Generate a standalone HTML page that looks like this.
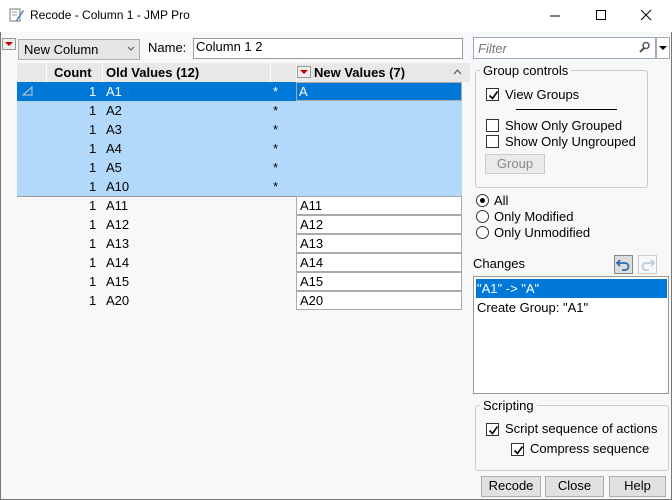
<!DOCTYPE html>
<html><head><style>
*{box-sizing:border-box;margin:0;padding:0}
body{width:672px;height:500px;background:#f8f8f8;font-family:"Liberation Sans",sans-serif;font-size:13px;color:#000;position:relative;overflow:hidden}
.a{position:absolute}
.t{position:absolute;white-space:nowrap;line-height:19px}
.cb{position:absolute;width:13px;height:13px;border:1px solid #333;background:#fff}
.cb svg{position:absolute;left:1px;top:1px}
.rb{position:absolute;width:13px;height:13px;border:1px solid #333;border-radius:50%;background:#fff}
.btn{position:absolute;border:1px solid #adadad;background:#e1e1e1;text-align:center;line-height:18px;font-size:13px}
.nv{position:absolute;left:296px;width:166px;height:19px;border:1px solid #aaa;background:#fff;padding-left:3px;line-height:17px}
</style></head><body>
<div class="a" style="left:0;top:0;width:672px;height:32px;background:#fff"></div>
<svg class="a" style="left:9px;top:7px" width="16" height="16"><rect x="1" y="2" width="10" height="12" fill="#fff" stroke="#777"/><line x1="3" y1="5" x2="8" y2="5" stroke="#999"/><line x1="3" y1="8" x2="8" y2="8" stroke="#999"/><path d="M7 13 L14 3 L15 4 L8 14 Z" fill="#4a7fc0"/></svg>
<div class="t" style="left:30px;top:6px;font-size:12px">Recode - Column 1 - JMP Pro</div>
<svg class="a" style="left:550px;top:8px" width="110" height="16"><line x1="0" y1="8" x2="10" y2="8" stroke="#000"/><rect x="46.5" y="2.5" width="9" height="9" fill="none" stroke="#000"/><path d="M91 2 L101 12 M101 2 L91 12" stroke="#000"/></svg>
<div class="a" style="left:0;top:32px;width:1px;height:468px;background:#777"></div>
<div class="a" style="left:671px;top:32px;width:1px;height:468px;background:#777"></div>
<div class="a" style="left:0;top:499px;width:672px;height:1px;background:#777"></div>
<div class="a" style="left:2px;top:38px;width:14px;height:12px;border:1px solid #999;background:#eee"></div>
<svg class="a" style="left:4px;top:40px" width="10" height="8"><path d="M1 2 L9 2 L5 6 Z" fill="#c00"/></svg>
<div class="a" style="left:18px;top:39px;width:122px;height:21px;border:1px solid #adadad;background:#e5e5e5"></div>
<div class="t" style="left:24px;top:40px;font-size:13px">New Column</div>
<svg class="a" style="left:127px;top:46px" width="8" height="6"><path d="M1 1 L4 4 L7 1" fill="none" stroke="#555"/></svg>
<div class="t" style="left:148px;top:38px;font-size:13px">Name:</div>
<div class="a" style="left:193px;top:38px;width:270px;height:21px;border:1px solid #999;background:#fff"></div>
<div class="t" style="left:196px;top:37px;font-size:13px">Column 1 2</div>
<div class="a" style="left:17px;top:63px;width:453px;height:19px;background:#e8e8e8"></div>
<div class="a" style="left:46px;top:63px;width:1px;height:19px;background:#fff"></div>
<div class="a" style="left:102px;top:63px;width:1px;height:19px;background:#fff"></div>
<div class="a" style="left:270px;top:63px;width:1px;height:19px;background:#fff"></div>
<div class="a" style="left:296px;top:63px;width:1px;height:19px;background:#fff"></div>
<div class="t" style="left:54px;top:63px;font-weight:bold">Count</div>
<div class="t" style="left:106px;top:63px;font-weight:bold">Old Values (12)</div>
<div class="a" style="left:297px;top:66px;width:14px;height:12px;border:1px solid #999;background:#eee"></div>
<svg class="a" style="left:299px;top:68px" width="10" height="8"><path d="M1 2 L9 2 L5 6 Z" fill="#c00"/></svg>
<div class="t" style="left:314px;top:63px;font-weight:bold">New Values (7)</div>
<svg class="a" style="left:453px;top:69px" width="9" height="6"><path d="M1 5 L4.5 1 L8 5" fill="none" stroke="#444"/></svg>
<div class="a" style="left:17px;top:82px;width:445px;height:114px;background:#b3d9fa"></div>
<div class="a" style="left:17px;top:82px;width:445px;height:19px;background:#0078d7"></div>
<div class="a" style="left:17px;top:196px;width:445px;height:1px;background:#999"></div>
<svg class="a" style="left:22px;top:86px" width="12" height="10"><path d="M1 9 L10 9 L10 1 Z" fill="none" stroke="#ccc"/></svg>
<div class="a" style="left:296px;top:82px;width:166px;height:19px;border:1px solid #aaa"></div>
<div class="t" style="left:299px;top:82px;color:#fff">A</div>
<div class="t" style="left:89px;top:82px;color:#fff">1</div><div class="t" style="left:106px;top:82px;color:#fff">A1</div><div class="t" style="left:273px;top:82px;color:#fff">*</div>
<div class="t" style="left:89px;top:101px">1</div><div class="t" style="left:106px;top:101px">A2</div><div class="t" style="left:273px;top:101px">*</div>
<div class="t" style="left:89px;top:120px">1</div><div class="t" style="left:106px;top:120px">A3</div><div class="t" style="left:273px;top:120px">*</div>
<div class="t" style="left:89px;top:139px">1</div><div class="t" style="left:106px;top:139px">A4</div><div class="t" style="left:273px;top:139px">*</div>
<div class="t" style="left:89px;top:158px">1</div><div class="t" style="left:106px;top:158px">A5</div><div class="t" style="left:273px;top:158px">*</div>
<div class="t" style="left:89px;top:177px">1</div><div class="t" style="left:106px;top:177px">A10</div><div class="t" style="left:273px;top:177px">*</div>
<div class="t" style="left:89px;top:196px">1</div><div class="t" style="left:106px;top:196px">A11</div><div class="nv" style="top:196px">A11</div>
<div class="t" style="left:89px;top:215px">1</div><div class="t" style="left:106px;top:215px">A12</div><div class="nv" style="top:215px">A12</div>
<div class="t" style="left:89px;top:234px">1</div><div class="t" style="left:106px;top:234px">A13</div><div class="nv" style="top:234px">A13</div>
<div class="t" style="left:89px;top:253px">1</div><div class="t" style="left:106px;top:253px">A14</div><div class="nv" style="top:253px">A14</div>
<div class="t" style="left:89px;top:272px">1</div><div class="t" style="left:106px;top:272px">A15</div><div class="nv" style="top:272px">A15</div>
<div class="t" style="left:89px;top:291px">1</div><div class="t" style="left:106px;top:291px">A20</div><div class="nv" style="top:291px">A20</div>
<div class="a" style="left:473px;top:37px;width:183px;height:22px;border:1px solid #9ac;background:#fff"></div>
<div class="t" style="left:478px;top:39px;font-style:italic;color:#777">Filter</div>
<svg class="a" style="left:639px;top:41px" width="12" height="12"><circle cx="7" cy="4.5" r="3" fill="none" stroke="#555" stroke-width="1.5"/><line x1="5" y1="7" x2="1" y2="11" stroke="#555" stroke-width="2"/></svg>
<div class="a" style="left:656px;top:37px;width:14px;height:22px;border:1px solid #aaa;background:#fff"></div>
<svg class="a" style="left:658px;top:45px" width="10" height="6"><path d="M1 1 L9 1 L5 5 Z" fill="#000"/></svg>
<div class="a" style="left:475px;top:70px;width:173px;height:118px;border:1px solid #ccc;border-radius:3px"></div>
<div class="t" style="left:480px;top:61px;background:#f8f8f8;padding:0 3px;font-size:13px">Group controls</div>
<div class="cb" style="left:486px;top:88px"><svg width="11" height="11"><path d="M1.5 5.5 L4.5 8.5 L9.5 1.5" fill="none" stroke="#000" stroke-width="1.6"/></svg></div>
<div class="t" style="left:505px;top:85px;font-size:13px">View Groups</div>
<div class="a" style="left:516px;top:109px;width:101px;height:1px;background:#000"></div>
<div class="cb" style="left:486px;top:119px"></div>
<div class="t" style="left:505px;top:116px;font-size:13px">Show Only Grouped</div>
<div class="cb" style="left:486px;top:135px"></div>
<div class="t" style="left:505px;top:132px;font-size:13px">Show Only Ungrouped</div>
<div class="btn" style="left:485px;top:154px;width:60px;height:20px;color:#888;background:#eaeaea;border-color:#ccc">Group</div>
<div class="rb" style="left:476px;top:194px"></div><div class="a" style="left:480px;top:198px;width:5px;height:5px;border-radius:50%;background:#000"></div>
<div class="t" style="left:494px;top:191px;font-size:13px">All</div>
<div class="rb" style="left:476px;top:210px"></div>
<div class="t" style="left:494px;top:207px;font-size:13px">Only Modified</div>
<div class="rb" style="left:476px;top:226px"></div>
<div class="t" style="left:494px;top:223px;font-size:13px">Only Unmodified</div>
<div class="t" style="left:473px;top:254px;font-size:13px">Changes</div>
<div class="a" style="left:614px;top:255px;width:19px;height:19px;border:1px solid #888;background:#ddd"></div>
<svg class="a" style="left:616px;top:257px" width="15" height="15"><path d="M4 3 L1 6 L4 9 M1 6 L9 6 A3.5 3.5 0 0 1 9 13 L6 13" fill="none" stroke="#2b6cb0" stroke-width="1.8"/></svg>
<div class="a" style="left:638px;top:255px;width:19px;height:19px;border:1px solid #ccc"></div>
<svg class="a" style="left:640px;top:257px" width="15" height="15"><path d="M11 3 L14 6 L11 9 M14 6 L6 6 A3.5 3.5 0 0 0 6 13 L9 13" fill="none" stroke="#bcd" stroke-width="1.8"/></svg>
<div class="a" style="left:473px;top:276px;width:196px;height:118px;border:1px solid #999;background:#fff"></div>
<div class="a" style="left:476px;top:279px;width:191px;height:19px;background:#0078d7"></div>
<div class="t" style="left:477px;top:279px;color:#fff;font-size:13px">"A1" -&gt; "A"</div>
<div class="t" style="left:477px;top:298px;font-size:13px">Create Group: "A1"</div>
<div class="a" style="left:475px;top:405px;width:194px;height:66px;border:1px solid #ccc;border-radius:3px"></div>
<div class="t" style="left:480px;top:396px;background:#f8f8f8;padding:0 3px;font-size:13px">Scripting</div>
<div class="cb" style="left:486px;top:423px"><svg width="11" height="11"><path d="M1.5 5.5 L4.5 8.5 L9.5 1.5" fill="none" stroke="#000" stroke-width="1.6"/></svg></div>
<div class="t" style="left:505px;top:419px;font-size:13px">Script sequence of actions</div>
<div class="cb" style="left:511px;top:443px"><svg width="11" height="11"><path d="M1.5 5.5 L4.5 8.5 L9.5 1.5" fill="none" stroke="#000" stroke-width="1.6"/></svg></div>
<div class="t" style="left:530px;top:439px;font-size:13px">Compress sequence</div>
<div class="btn" style="left:481px;top:476px;width:60px;height:21px">Recode</div>
<div class="btn" style="left:545px;top:476px;width:59px;height:21px">Close</div>
<div class="btn" style="left:609px;top:476px;width:57px;height:21px">Help</div>
</body></html>
